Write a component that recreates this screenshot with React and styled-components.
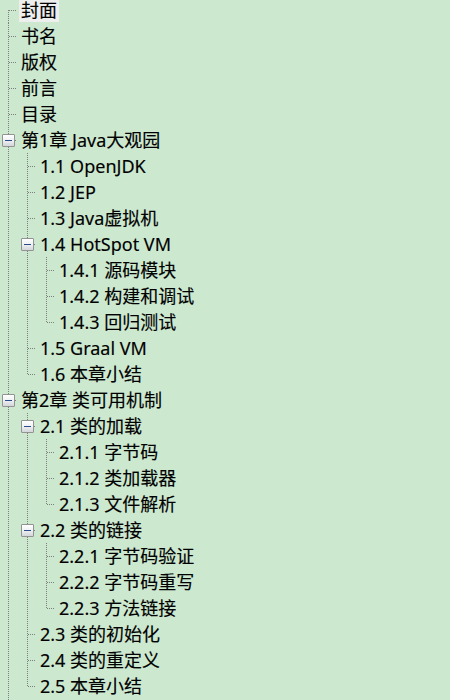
import React from 'react'
import styled, { createGlobalStyle } from 'styled-components'

const GlobalStyle = createGlobalStyle`
    html, body {
        margin: 0;
        padding: 0;
        background: #cce8cf;
    }
`

const toc = [
    { t: '封面', selected: true },
    { t: '书名' },
    { t: '版权' },
    { t: '前言' },
    { t: '目录' },
    {
        t: '第1章 Java大观园', c: [
            { t: '1.1 OpenJDK' },
            { t: '1.2 JEP' },
            { t: '1.3 Java虚拟机' },
            {
                t: '1.4 HotSpot VM', c: [
                    { t: '1.4.1 源码模块' },
                    { t: '1.4.2 构建和调试' },
                    { t: '1.4.3 回归测试' },
                ]
            },
            { t: '1.5 Graal VM' },
            { t: '1.6 本章小结' },
        ]
    },
    {
        t: '第2章 类可用机制', c: [
            {
                t: '2.1 类的加载', c: [
                    { t: '2.1.1 字节码' },
                    { t: '2.1.2 类加载器' },
                    { t: '2.1.3 文件解析' },
                ]
            },
            {
                t: '2.2 类的链接', c: [
                    { t: '2.2.1 字节码验证' },
                    { t: '2.2.2 字节码重写' },
                    { t: '2.2.3 方法链接' },
                ]
            },
            { t: '2.3 类的初始化' },
            { t: '2.4 类的重定义' },
            { t: '2.5 本章小结' },
        ]
    },
    { t: '第3章 运行时数据区', c: [{ t: '3.1 堆' }], collapsed: true },
]

// flatten the tree into rows, remembering which ancestor lines continue
const flatten = (nodes, guides = [], out = []) => {
    nodes.forEach((node, i) => {
        const last = i === nodes.length - 1
        out.push({
            ...node,
            guides,
            last,
            first: guides.length === 0 && i === 0,
            hasChildren: !!node.c,
        })
        if (node.c && !node.collapsed) flatten(node.c, [...guides, !last], out)
    })
    return out
}

const dotsV = 'repeating-linear-gradient(to bottom, #7f7f7f 0 1px, transparent 1px 2px)'
const dotsH = 'repeating-linear-gradient(to right, #7f7f7f 0 1px, transparent 1px 2px)'

const Tree = () => {
    const rows = flatten(toc)
    return (
        <TreeView>
            {rows.map((row, i) => (
                <Row key={i}>
                    {row.guides.map((line, j) => (
                        <Guide key={j} $line={line} />
                    ))}
                    <Connector $top={!row.first} $bottom={!row.last}>
                        {row.hasChildren && <ExpandBox $plus={row.collapsed} />}
                    </Connector>
                    <Label $selected={row.selected}>{row.t}</Label>
                </Row>
            ))}
        </TreeView>
    )
}

const App = () => (
    <>
        <GlobalStyle />
        <Page>
            <Tree />
        </Page>
    </>
)

const Page = styled.div`
    height: 700px;
    overflow: hidden;
`

const TreeView = styled.div`
    display: flex;
    flex-direction: column;
    margin-top: -3px;
    font-family: "Noto Sans", "Noto Sans CJK SC", sans-serif;
    font-size: 18px;
    color: #000;
`

const Row = styled.div`
    display: flex;
    align-items: center;
    height: 26px;
`

const Guide = styled.span`
    flex: none;
    align-self: stretch;
    width: 19px;
    background: ${p => p.$line ? dotsV : 'none'};
    background-size: 1px 100%;
    background-position: 8px 0;
    background-repeat: no-repeat;
`

/* one indent cell: the dotted elbow is its background, the box sits in its middle */
const Connector = styled.span`
    flex: none;
    align-self: stretch;
    display: flex;
    align-items: center;
    width: 18px;
    margin-right: 1px;
    padding-left: 2px;
    box-sizing: border-box;
    background:
        ${dotsH} 9px 13px / 8px 1px no-repeat,
        ${dotsV} 8px ${p => p.$top ? '0' : '13px'} / 1px ${p => p.$top && p.$bottom ? '100%' : '13px'} no-repeat;
`

const ExpandBox = styled.span`
    display: flex;
    align-items: center;
    justify-content: center;
    width: 11px;
    height: 11px;
    margin-top: 1px;
    border: 1px solid #939393;
    border-radius: 1px;
    background: linear-gradient(to bottom, #ffffff 0%, #eef0f2 50%, #d3d6da 100%);

    &::before {
        content: '';
        width: 7px;
        height: 7px;
        background:
            linear-gradient(#2b4c8c, #2b4c8c) center / 7px 1px no-repeat
            ${p => p.$plus ? ', linear-gradient(#2b4c8c, #2b4c8c) center / 1px 7px no-repeat' : ''};
    }
`

const Label = styled.span`
    padding: 0 2px;
    height: 23px;
    line-height: 23px;
    white-space: nowrap;
    -webkit-text-stroke: 0.15px #000;
    background: ${p => p.$selected ? '#eeeeee' : 'transparent'};
`

export default App
